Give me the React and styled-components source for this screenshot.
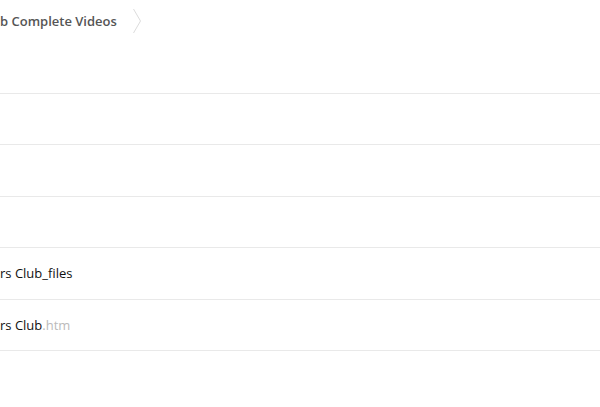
import React from 'react';
import styled, { createGlobalStyle } from 'styled-components';

const GlobalStyle = createGlobalStyle`
  html, body {
    margin: 0;
    padding: 0;
    background: #fff;
    font-family: "Open Sans", "Liberation Sans", sans-serif;
    overflow: hidden;
  }
`;

const Page = styled.div`
  width: 600px;
  height: 407px;
  background: #fff;
  overflow: hidden;
`;

const Breadcrumbs = styled.div`
  display: flex;
  align-items: center;
  height: 42px;
  gap: 15px;
`;

const Crumb = styled.span`
  font-size: 13px;
  font-weight: 600;
  color: #555;
  white-space: nowrap;
  line-height: 1;
  margin-top: 1px;
`;

const Chevron = styled.svg`
  display: block;
  flex: none;
`;

const List = styled.div`
  display: flex;
  flex-direction: column;
`;

const Row = styled.div`
  display: flex;
  align-items: center;
  height: 50.5px;
  border-bottom: 1px solid #e9e9e9;
  background: #fff;
  font-size: 13px;
  color: #111;
  white-space: nowrap;
`;

const Ext = styled.span`
  color: #bbb;
`;

const rows = [
  { name: '' },
  { name: '' },
  { name: '' },
  { name: '' },
  { name: 'rs Club_files' },
  { name: 'rs Club', ext: '.htm' },
];

export default function App() {
  return (
    <Page>
      <GlobalStyle />
      <Breadcrumbs>
        <Crumb>b Complete Videos</Crumb>
        <Chevron width="10" height="26" viewBox="0 0 10 26">
          <path d="M1.5 1 L8.5 13 L1.5 25" fill="none" stroke="#dcdcdc" strokeWidth="1" />
        </Chevron>
      </Breadcrumbs>
      <List>
        {rows.map((r, i) => (
          <Row key={i}>
            {r.name}
            {r.ext && <Ext>{r.ext}</Ext>}
          </Row>
        ))}
      </List>
    </Page>
  );
}
